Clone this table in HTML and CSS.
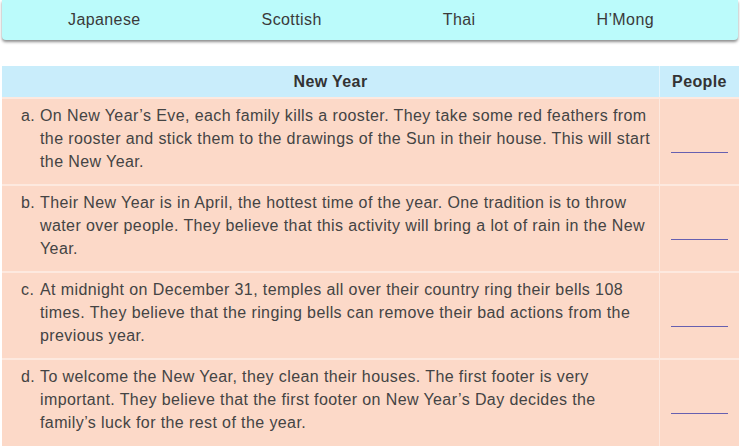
FILE: index.html
```html
<!DOCTYPE html>
<html lang="en">
<head>
    <meta charset="UTF-8">
    <meta name="viewport" content="width=device-width, initial-scale=1.0">
    <title>New Year</title>
    <link rel="stylesheet" href="styles.css">
</head>
<body>
    <div class="peoples">
        <span>Japanese</span>
        <span>Scottish</span>
        <span>Thai</span>
        <span>H’Mong</span>
    </div>
    <table class="match">
        <thead>
            <tr>
                <th class="col-text">New Year</th>
                <th class="col-people">People</th>
            </tr>
        </thead>
        <tbody>
            <tr>
                <td class="desc"><div class="item"><span class="letter">a.</span><p>On New Year’s Eve, each family kills a rooster. They take some red feathers from the rooster and stick them to the drawings of the Sun in their house. This will start the New Year.</p></div></td>
                <td class="answer"><span class="blank"></span></td>
            </tr>
            <tr>
                <td class="desc"><div class="item"><span class="letter">b.</span><p>Their New Year is in April, the hottest time of the year. One tradition is to throw water over people. They believe that this activity will bring a lot of rain in the New Year.</p></div></td>
                <td class="answer"><span class="blank"></span></td>
            </tr>
            <tr>
                <td class="desc"><div class="item"><span class="letter">c.</span><p>At midnight on December 31, temples all over their country ring their bells 108 times. They believe that the ringing bells can remove their bad actions from the previous year.</p></div></td>
                <td class="answer"><span class="blank"></span></td>
            </tr>
            <tr>
                <td class="desc"><div class="item"><span class="letter">d.</span><p>To welcome the New Year, they clean their houses. The first footer is very important. They believe that the first footer on New Year’s Day decides the family’s luck for the rest of the year.</p></div></td>
                <td class="answer"><span class="blank"></span></td>
            </tr>
        </tbody>
    </table>
</body>
</html>
```

FILE: styles.css
```css
body {
    margin: 0;
    padding: 0 2px;
    font-family: 'Liberation Sans', Arial, sans-serif;
    font-size: 16px;
    letter-spacing: 0.4px;
    color: #444;
    background-color: #fff;
}
.peoples {
    display: flex;
    align-items: center;
    gap: 121px;
    height: 40px;
    padding-left: 66px;
    background-color: #bbfbfb;
    border-radius: 0 0 4px 4px;
    box-shadow: 0 2px 3px rgba(0, 0, 0, 0.45);
    color: #3a3a3a;
    margin-bottom: 26px;
}
.match {
    width: 736px;
    border-collapse: collapse;
    table-layout: fixed;
}
.match th {
    height: 31px;
    padding: 0;
    background-color: #c9edfb;
    color: #333;
    font-weight: bold;
    text-align: center;
    border-right: 1px solid #e6f6fd;
}
.match th:last-child {
    border-right: none;
}
.col-text {
    width: 657px;
}
.col-people {
    width: 79px;
}
.match td {
    background-color: #fcd9c8;
    border-top: 2px solid #fde9df;
    vertical-align: top;
}
.desc {
    height: 87px;
    padding: 5px 8px 0 19px;
    line-height: 23px;
    border-right: 1px solid #fde9df;
    box-sizing: border-box;
}
.item {
    display: flex;
}
.letter {
    width: 19px;
    flex-shrink: 0;
}
.item p {
    margin: 0;
}
.answer {
    padding: 53px 0 0;
}
.blank {
    display: block;
    width: 57px;
    margin: 0 auto;
    border-top: 1px solid #6660b0;
}
```
